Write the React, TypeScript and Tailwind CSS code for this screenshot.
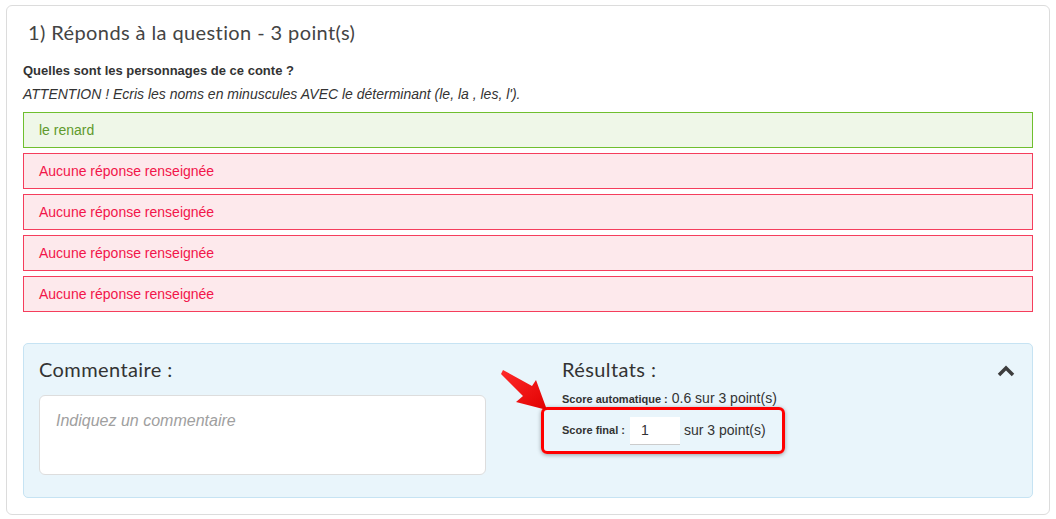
import React from 'react';

const answers = [
  { text: 'le renard', ok: true },
  { text: 'Aucune réponse renseignée', ok: false },
  { text: 'Aucune réponse renseignée', ok: false },
  { text: 'Aucune réponse renseignée', ok: false },
  { text: 'Aucune réponse renseignée', ok: false },
];

const titleFont = { fontFamily: 'Lato, "Noto Sans", sans-serif' };

export default function App() {
  return (
    <div className="w-[1056px] h-[519px] bg-white pt-[5px] pl-[6px] pr-[6px]" style={{ fontFamily: '"Liberation Sans", Arial, sans-serif' }}>
      <div className="relative border border-[#dcdcdc] rounded-[6px] h-[510px] px-[16px] pt-[15px]">
        <h2 className="text-[20px] leading-[22px] text-[#444] pl-[5px] tracking-[0.4px]" style={titleFont}>
          1) Réponds à la question - 3 point(s)
        </h2>

        <div className="mt-[20px] text-[13px] leading-[15px] font-bold text-[#333]">Quelles sont les personnages de ce conte ?</div>
        <div className="mt-[8px] text-[14px] leading-[16px] italic text-[#333]">
          ATTENTION ! Ecris les noms en minuscules AVEC le déterminant (le, la , les, l').
        </div>

        <div className="mt-[10px] flex flex-col gap-[5px]">
          {answers.map((a, i) => (
            <div
              key={i}
              className={
                a.ok
                  ? 'h-[36px] flex items-center px-[15px] text-[14px] border border-[#6fbf2e] bg-[#eff7e8] text-[#5f9a2d]'
                  : 'h-[36px] flex items-center px-[15px] text-[14px] border border-[#f53d5c] bg-[#fde9ec] text-[#f2154a]'
              }
            >
              {a.text}
            </div>
          ))}
        </div>

        <div className="relative mt-[31px] h-[155px] border border-[#c6e3f3] bg-[#e9f5fb] rounded-[5px] flex">
          <div className="w-[520px] pl-[15px] pt-[14px]">
            <div className="text-[20px] leading-[22px] text-[#333] tracking-[0.4px]" style={titleFont}>Commentaire :</div>
            <div className="mt-[15px] w-[447px] h-[80px] bg-white border border-[#dddddd] rounded-[6px] px-[16px] pt-[13px]">
              <span className="italic text-[16px] text-[#a0a0a0]">Indiquez un commentaire</span>
            </div>
          </div>

          <div className="pt-[14px] pl-[18px] flex-1">
            <div className="text-[20px] leading-[22px] text-[#333] tracking-[0.4px]" style={titleFont}>Résultats :</div>
            <div className="mt-[8px] text-[#333] flex items-baseline">
              <span className="text-[11px] font-bold">Score automatique :</span>
              <span className="text-[14px] ml-[4px]">0.6 sur 3 point(s)</span>
            </div>
            <div className="-ml-[21px] -mt-[2px] w-[244px] h-[47px] border-[3px] border-[#f00] rounded-[6px] shadow-[0_1px_4px_rgba(0,0,0,0.35)] flex items-center pl-[18px] text-[#333]">
              <span className="text-[11px] font-bold">Score final :</span>
              <div className="ml-[5px] w-[50px] h-[28px] bg-white border-b border-[#ccc] flex items-center pl-[11px] text-[14px]">1</div>
              <span className="ml-[4px] text-[14px]">sur 3 point(s)</span>
            </div>
          </div>

          <svg className="absolute right-[16px] top-[20px]" width="20" height="14" viewBox="0 0 20 14">
            <path d="M3 11 L10 4 L17 11" fill="none" stroke="#3d3d3d" strokeWidth="3.5" />
          </svg>

          <svg className="absolute left-[477px] top-[25px]" width="50" height="44" viewBox="0 0 50 44">
            <defs>
              <linearGradient id="arr" x1="0" y1="0" x2="1" y2="1">
                <stop offset="0%" stopColor="#ff2a2a" />
                <stop offset="100%" stopColor="#e00000" />
              </linearGradient>
            </defs>
            <polygon points="2,1 31,17 35,11 46,41 15,33 22,27 0,5" fill="url(#arr)" />
          </svg>
        </div>
      </div>
    </div>
  );
}
